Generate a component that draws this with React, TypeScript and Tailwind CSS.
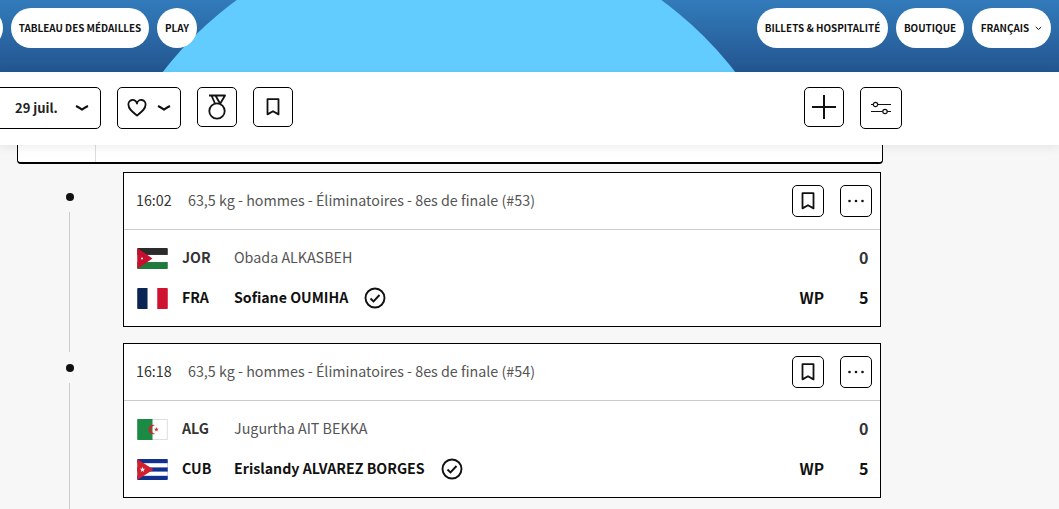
import React from "react";

const font = { fontFamily: '"Noto Sans CJK JP", "Noto Sans", sans-serif' };

function Pill({ children, className = "" }: { children?: React.ReactNode; className?: string }) {
  return (
    <div className={"h-10 rounded-[20px] bg-white flex items-center justify-center text-[9.900px] font-bold text-[#111] whitespace-nowrap " + className}>
      {children}
    </div>
  );
}

function Btn({ children, className = "" }: { children: React.ReactNode; className?: string }) {
  return (
    <div className={"border border-black rounded-[5px] bg-white flex items-center justify-center shrink-0 " + className}>
      {children}
    </div>
  );
}

const Bookmark = () => (
  <svg width="14" height="18" viewBox="0 0 14 18" fill="none" stroke="#111" strokeWidth="1.8">
    <path d="M1.500 1.200h11v15.200L7 13.200l-5.500 3.200z" strokeLinejoin="round" />
  </svg>
);

const Chevron = ({ w = 14 }: { w?: number }) => (
  <svg width={w} height="8" viewBox="0 0 14 8" fill="none" stroke="#111" strokeWidth="2.200">
    <path d="M1 2c2.500 1 4 2.300 6 3.500C9 4.300 10.500 3 13 2" />
  </svg>
);

const Check = () => (
  <svg width="22" height="22" viewBox="0 0 22 22" fill="none" stroke="#111" strokeWidth="1.900">
    <circle cx="11" cy="11" r="9.500" />
    <path d="M6.500 11.500l3 3 6-6.500" />
  </svg>
);

const Jor = () => (
  <svg width="31" height="21" viewBox="0 0 32 22" className="rounded-[1px]">
    <rect width="32" height="7.300" fill="#2b2b2b" />
    <rect y="7.300" width="32" height="7.400" fill="#fff" />
    <rect y="14.700" width="32" height="7.300" fill="#1f7a3d" />
    <path d="M0 0l16 11L0 22z" fill="#c8102e" />
    <circle cx="5" cy="11" r="1" fill="#fff" />
  </svg>
);
const Fra = () => (
  <svg width="31" height="21" viewBox="0 0 32 22" className="rounded-[1px]">
    <rect width="11" height="22" fill="#0a2454" />
    <rect x="11" width="10" height="22" fill="#fff" />
    <rect x="21" width="11" height="22" fill="#ce1230" />
  </svg>
);
const Alg = () => (
  <svg width="31" height="21" viewBox="0 0 32 22" className="rounded-[1px]">
    <rect width="32" height="22" fill="#f3f3f3" />
    <rect x="0.500" y="0.500" width="31" height="21" fill="#fff" stroke="#ddd" />
    <rect width="16" height="22" fill="#1a8a45" />
    <path d="M19 6.500a5 5 0 1 0 0 9 4 4 0 1 1 0-9z" fill="#d2232a" />
    <path d="M20 8.500l.6 1.800h1.900l-1.500 1.100.6 1.800-1.600-1.100-1.500 1.100.6-1.800-1.500-1.100h1.800z" fill="#d2232a" />
  </svg>
);
const Cub = () => (
  <svg width="31" height="21" viewBox="0 0 32 22" className="rounded-[1px]">
    <rect width="32" height="22" fill="#12318f" />
    <rect y="4.400" width="32" height="4.400" fill="#fff" />
    <rect y="13.200" width="32" height="4.400" fill="#fff" />
    <path d="M0 0l17 11L0 22z" fill="#d0202e" />
    <path d="M5.500 8l.7 2.100h2.200l-1.800 1.300.7 2.100-1.800-1.300-1.800 1.300.7-2.100-1.800-1.300h2.200z" fill="#fff" />
  </svg>
);

function Row({ flag, code, name, win, score }: { flag: React.ReactNode; code: string; name: string; win?: boolean; score: string }) {
  return (
    <div className="flex items-center h-10">
      <div className="w-[46px] pl-px flex items-center">{flag}</div>
      <div className={"w-[52px] text-[14.200px] font-bold mb-px " + (win ? "text-[#111]" : "text-[#333]")}>{code}</div>
      {win ? (
        <div className="flex items-center gap-[16px] text-[14.200px] font-bold text-[#111]">
          <span className="mb-px">{name}</span>
          <Check />
        </div>
      ) : (
        <div className="text-[14.300px] text-[#555] mb-[2px]">{name}</div>
      )}
      <div className="ml-auto flex items-center">
        {win && <span className="text-[15.500px] font-bold text-[#111] mr-[35px]">WP</span>}
        <span className={"text-[16px] font-bold w-[9px] text-right mb-[2px] " + (win ? "text-[#111]" : "text-[#333]")}>{score}</span>
      </div>
    </div>
  );
}

function Card({ time, num, a, b }: { time: string; num: string; a: React.ReactNode; b: React.ReactNode }) {
  return (
    <div className="w-[758px] h-[155px] border border-black bg-white shrink-0">
      <div className="h-[57px] border-b border-[#ccc] flex items-center pl-3 pr-2">
        <span className="text-[14.300px] text-[#333] w-[52px] mb-[2px]">{time}</span>
        <span className="text-[14.300px] text-[#555] mb-[2px]">63,5 kg - hommes - Éliminatoires - 8es de finale (#{num})</span>
        <div className="ml-auto flex gap-4">
          <Btn className="w-8 h-8"><Bookmark /></Btn>
          <Btn className="w-8 h-8">
            <svg width="18" height="4" viewBox="0 0 18 4" fill="#111">
              <circle cx="2.500" cy="2" r="1.300" />
              <circle cx="9" cy="2" r="1.300" />
              <circle cx="15.500" cy="2" r="1.300" />
            </svg>
          </Btn>
        </div>
      </div>
      <div className="px-3 pt-2">
        {a}
        {b}
      </div>
    </div>
  );
}

function Timeline() {
  return (
    <div className="w-[123px] h-[155px] shrink-0 flex flex-col items-start pl-[66px]">
      <div className="w-2 h-2 shrink-0 rounded-full bg-[#111] mt-[21px]" />
      <div className="w-px bg-[#ccc] h-[140px] mt-[11px] ml-[3px] shrink-0" />
    </div>
  );
}

export default function App() {
  return (
    <div className="w-[1059px] h-[509px] overflow-hidden bg-[#f7f7f7] flex flex-col" style={font}>
      <header className="relative h-[72px] shrink-0 overflow-hidden bg-gradient-to-b from-[#327bbb] to-[#235690] flex items-start justify-between pt-2 pr-2">
        <div className="absolute left-[88px] top-[-69px] w-[722px] h-[722px] rounded-full bg-[#63ccff]" />
        <div className="relative flex gap-2 ml-[-37px]">
          <Pill className="w-10" />
          <Pill className="w-[138px]">TABLEAU DES MÉDAILLES</Pill>
          <Pill className="w-10">PLAY</Pill>
        </div>
        <div className="relative flex gap-2">
          <Pill className="w-[131px]">BILLETS &amp; HOSPITALITÉ</Pill>
          <Pill className="w-[68px]">BOUTIQUE</Pill>
          <Pill className="w-[79px] gap-[6px]">
            FRANÇAIS
            <svg width="7" height="5" viewBox="0 0 7 5" fill="none" stroke="#111" strokeWidth="1"><path d="M.8 1l2.700 2.500L6.200 1" /></svg>
          </Pill>
        </div>
      </header>

      <div className="relative z-10 h-[73px] shrink-0 bg-white shadow-[0_2px_10px_rgba(0,0,0,0.08)] flex items-start pt-[15px]">
        <Btn className="w-[112px] h-[42px] ml-[-11px]">
          <div className="w-full flex items-center justify-between pl-[25px] pr-[11px]">
            <span className="text-[13px] font-bold text-[#222]">29 juil.</span>
            <Chevron />
          </div>
        </Btn>
        <Btn className="w-16 h-[42px] ml-4 gap-[10px]">
          <svg width="20" height="18" viewBox="0 0 20 18" fill="none" stroke="#111" strokeWidth="1.800">
            <path d="M10 16.500C5 12.500 1.500 10 1.500 6A4.300 4.300 0 0 1 10 4.500 4.300 4.300 0 0 1 18.500 6c0 4-3.500 6.500-8.500 10.500z" strokeLinejoin="round" />
          </svg>
          <Chevron />
        </Btn>
        <Btn className="w-10 h-10 ml-4">
          <svg width="20" height="26" viewBox="0 0 20 26" fill="none" stroke="#111" strokeWidth="1.800">
            <circle cx="10" cy="17" r="7.700" />
            <path d="M2 1.500h16L13 10M4.500 1.500l3.500 8M8.500 1.500l4.500 8" strokeLinejoin="round" />
          </svg>
        </Btn>
        <Btn className="w-10 h-10 ml-4"><Bookmark /></Btn>
        <Btn className="w-10 h-10 ml-[511px]">
          <svg width="26" height="26" viewBox="0 0 26 26" stroke="#111" strokeWidth="2">
            <path d="M1 13h24M13 1v24" />
          </svg>
        </Btn>
        <Btn className="w-[42px] h-[42px] ml-4">
          <svg width="22" height="16" viewBox="0 0 22 16" fill="none" stroke="#111" strokeWidth="1.200">
            <path d="M1 4.500h2.500M8 4.500h13M1 11.500h11.500M17 11.500h4" />
            <circle cx="5.500" cy="4.500" r="2.200" />
            <circle cx="15" cy="11.500" r="2.200" />
          </svg>
        </Btn>
      </div>

      <div className="ml-[17px] w-[866px] h-[19px] shrink-0 border border-t-0 border-b-2 border-black rounded-b-[4px] bg-white flex">
        <div className="w-[78px] border-r border-[#ddd]" />
      </div>

      <div className="mt-2 flex shrink-0">
        <Timeline />
        <Card
          time="16:02"
          num="53"
          a={<Row flag={<Jor />} code="JOR" name="Obada ALKASBEH" score="0" />}
          b={<Row flag={<Fra />} code="FRA" name="Sofiane OUMIHA" win score="5" />}
        />
      </div>
      <div className="mt-4 flex shrink-0">
        <Timeline />
        <Card
          time="16:18"
          num="54"
          a={<Row flag={<Alg />} code="ALG" name="Jugurtha AIT BEKKA" score="0" />}
          b={<Row flag={<Cub />} code="CUB" name="Erislandy ALVAREZ BORGES" win score="5" />}
        />
      </div>
    </div>
  );
}
